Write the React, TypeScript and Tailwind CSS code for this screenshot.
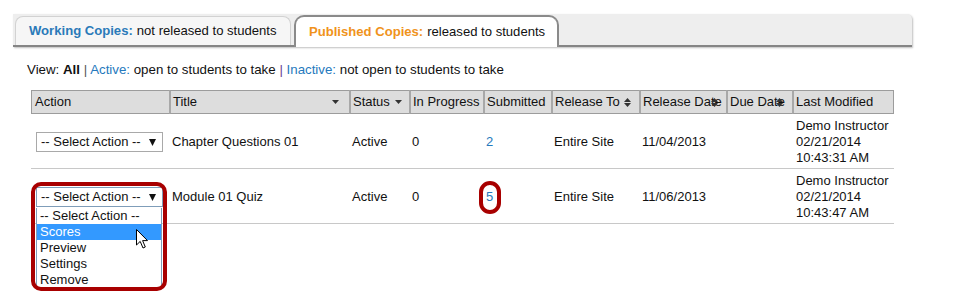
import React from "react";

const cols =
  "grid grid-cols-[138px_180px_60px_74px_68px_88px_87px_66px_102px]";

const CaretDown = () => (
  <svg width="7" height="4" viewBox="0 0 7 4">
    <path d="M0 0h7L3.5 4z" fill="#333" />
  </svg>
);

const SortBoth = () => (
  <svg width="7" height="9" viewBox="0 0 7 9">
    <path d="M3.5 0L7 4H0z M0 5h7L3.5 9z" fill="#333" />
  </svg>
);

const SelectBox = ({ focused }: { focused?: boolean }) => (
  <div
    className={
      "w-[127px] h-[20px] bg-white border flex items-center justify-between pl-[4px] pr-[6px] " +
      (focused ? "border-[#7f9db9]" : "border-[#a9a9a9]")
    }
  >
    <span>-- Select Action --</span>
    <svg width="7" height="8" viewBox="0 0 7 8">
      <path d="M0 1h7L3.5 8z" fill="#111" />
    </svg>
  </div>
);

const Cursor = () => (
  <svg width="13" height="20" viewBox="0 0 13 20">
    <path
      d="M0.5 0.5L0.5 16L4.2 12.4L7 19L9.3 18L6.6 11.6L11.5 11.6Z"
      fill="#fff"
      stroke="#000"
      strokeWidth="1"
      strokeLinejoin="round"
    />
  </svg>
);

const headers: { label: string; icon?: "caret" | "sort"; right?: string }[] = [
  { label: "Action" },
  { label: "Title", icon: "caret", right: "right-[10px]" },
  { label: "Status", icon: "caret", right: "right-[7px]" },
  { label: "In Progress" },
  { label: "Submitted" },
  { label: "Release To", icon: "sort", right: "right-[8px]" },
  { label: "Release Date", icon: "sort", right: "right-[8px]" },
  { label: "Due Date", icon: "sort", right: "right-[9px]" },
  { label: "Last Modified" },
];

const options = ["-- Select Action --", "Scores", "Preview", "Settings", "Remove"];

export default function App() {
  return (
    <div className="w-[966px] h-[296px] bg-white overflow-hidden font-['Liberation_Sans',Arial,sans-serif] text-[13px] leading-[16px] text-[#111] pt-[14px]">
      {/* tabs */}
      <div className="ml-[13px] w-[899px] h-[33px] bg-[#eeeeee] rounded-tr-[5px] border-b-2 border-[#858585] shadow-[1px_1px_2px_rgba(0,0,0,0.25)] flex items-end pl-[2px] gap-[3px]">
        <div className="w-[276px] h-[29px] bg-[#f6f6f6] border border-b-0 border-[#d2d2d2] rounded-t-[8px] flex items-center pl-[13px] text-[13.1px]">
          <span className="font-bold text-[#2a7ab9]">Working Copies:</span>
          <span className="ml-[4px]">not released to students</span>
        </div>
        <div className="w-[265px] h-[32px] bg-white border-2 border-b-0 border-[#8a8a8a] rounded-t-[10px] mb-[-2px] flex items-center pl-[13px] text-[13.1px]">
          <span className="font-bold text-[#f0931c]">Published Copies:</span>
          <span className="ml-[4px]">released to students</span>
        </div>
      </div>

      {/* view filter */}
      <div className="mt-[15px] pl-[27px] text-[13.3px]">
        View: <span className="font-bold">All</span>{" "}
        <span className="text-[#555]">|</span>{" "}
        <span className="text-[#2679bd]">Active:</span> open to students to take{" "}
        <span className="text-[#6b3d8f]">|</span>{" "}
        <span className="text-[#2679bd]">Inactive:</span> not open to students to take
      </div>

      {/* table */}
      <div className="mt-[12px] ml-[31px] w-[863px]">
        <div className={cols}>
          {headers.map((h, i) => (
            <div
              key={h.label}
              className={
                "relative h-[24px] flex items-center bg-[#dddddd] border-y border-[#9c9c9c] whitespace-nowrap " +
                (i === 0 ? "border-l pl-[3px]" : "border-l-2 border-l-[#a8a8a8] pl-[2px]") +
                (i === headers.length - 1 ? " border-r" : "")
              }
            >
              {h.label}
              {h.icon && (
                <span className={"absolute top-0 bottom-0 flex items-center " + h.right}>
                  {h.icon === "caret" ? <CaretDown /> : <SortBoth />}
                </span>
              )}
            </div>
          ))}
        </div>

        {/* row 1 */}
        <div className={cols + " h-[55px] items-center border-b border-[#c8c8c8] pt-[1px]"}>
          <div className="pl-[5px]">
            <SelectBox />
          </div>
          <div className="pl-[3px]">Chapter Questions 01</div>
          <div className="pl-[3px]">Active</div>
          <div className="pl-[3px]">0</div>
          <div className="pl-[3px] text-[#2679bd]">2</div>
          <div className="pl-[3px]">Entire Site</div>
          <div className="pl-[3px]">11/04/2013</div>
          <div />
          <div className="pl-[4px]">
            <div>Demo Instructor</div>
            <div>02/21/2014</div>
            <div>10:43:31 AM</div>
          </div>
        </div>

        {/* row 2 */}
        <div className={cols + " h-[55px] items-center border-b border-[#c8c8c8] pt-[1px]"}>
          <div className="relative h-full flex items-center pl-[5px] pt-[1px]">
            <SelectBox focused />
            <div className="absolute left-[5px] top-[38px] w-[126px] bg-white border border-[#7f9db9] border-t-0 z-10">
              {options.map((o) => (
                <div
                  key={o}
                  className={
                    "h-[16px] pl-[3px] " +
                    (o === "Scores" ? "bg-[#3399ff] text-white" : "")
                  }
                >
                  {o}
                </div>
              ))}
            </div>
            <div className="absolute left-0 top-[12px] w-[136px] h-[109px] border-4 border-[#a80000] rounded-[10px] z-20" />
            <div className="absolute left-[105px] top-[59px] z-30">
              <Cursor />
            </div>
          </div>
          <div className="pl-[3px]">Module 01 Quiz</div>
          <div className="pl-[3px]">Active</div>
          <div className="pl-[3px]">0</div>
          <div className="relative h-full flex items-center pl-[3px] text-[#2679bd]">
            5
            <div className="absolute left-[-4px] top-[11px] w-[22px] h-[33px] border-4 border-[#a80000] rounded-full" />
          </div>
          <div className="pl-[3px]">Entire Site</div>
          <div className="pl-[3px]">11/06/2013</div>
          <div />
          <div className="pl-[4px]">
            <div>Demo Instructor</div>
            <div>02/21/2014</div>
            <div>10:43:47 AM</div>
          </div>
        </div>
      </div>
    </div>
  );
}
